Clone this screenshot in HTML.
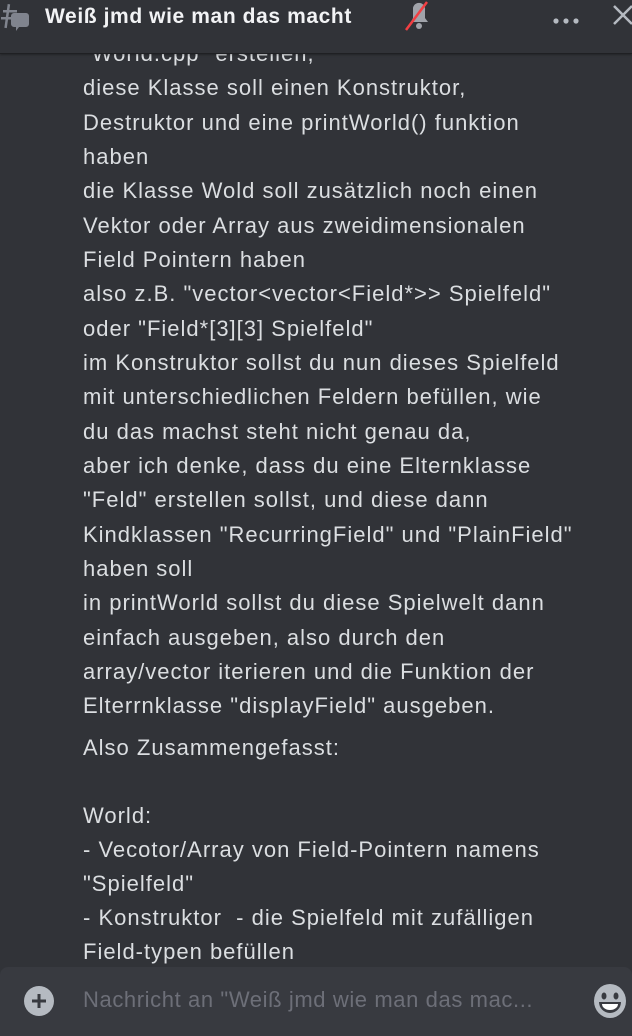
<!DOCTYPE html>
<html><head><meta charset="utf-8"><style>
body{margin:0;width:632px;height:1036px;overflow:hidden;background:#313338;font-family:"Liberation Sans",sans-serif;position:relative}
.hdr{position:absolute;left:0;top:0;width:632px;height:53px;background:#313338;border-bottom:1px solid #1f2023;z-index:2;box-shadow:0 1px 2px rgba(0,0,0,.3)}
.title{position:absolute;left:45px;top:5px;font-size:21px;letter-spacing:0.6px;font-weight:bold;color:#f2f3f5}
.msg{position:absolute;left:83px;top:37px;color:#dbdee1;font-size:22px;letter-spacing:1px;line-height:34.33px;white-space:pre}
.bar{position:absolute;left:0;top:967px;width:632px;height:69px;background:#383a40;border-radius:8px 8px 0 0}
.ph{position:absolute;left:83px;top:20px;font-size:22px;letter-spacing:0.6px;color:#6d6f78}
</style></head><body>
<div class="msg">"World.cpp" erstellen,
diese Klasse soll einen Konstruktor,
Destruktor und eine printWorld() funktion
haben
die Klasse Wold soll zusätzlich noch einen
Vektor oder Array aus zweidimensionalen
Field Pointern haben
also z.B. "vector&lt;vector&lt;Field*&gt;&gt; Spielfeld"
oder "Field*[3][3] Spielfeld"
im Konstruktor sollst du nun dieses Spielfeld
mit unterschiedlichen Feldern befüllen, wie
du das machst steht nicht genau da,
aber ich denke, dass du eine Elternklasse
"Feld" erstellen sollst, und diese dann
Kindklassen "RecurringField" und "PlainField"
haben soll
in printWorld sollst du diese Spielwelt dann
einfach ausgeben, also durch den
array/vector iterieren und die Funktion der
Elterrnklasse "displayField" ausgeben.</div>
<div class="msg" style="top:731px;line-height:34px">Also Zusammengefasst:

World:
- Vecotor/Array von Field-Pointern namens
"Spielfeld"
- Konstruktor  - die Spielfeld mit zufälligen
Field-typen befüllen</div>
<div class="hdr">
<svg style="position:absolute;left:0;top:2px" width="34" height="32" viewBox="0 0 34 32"><g fill="#80848e"><rect x="3" y="8" width="14" height="2.5"/><rect x="1" y="15" width="14" height="2.5"/><rect x="6" y="2" width="2.5" height="24" transform="rotate(8 7 14)"/><path d="M14 11h12a3 3 0 0 1 3 3v8a3 3 0 0 1-3 3h-7l-3 4v-4h-2a3 3 0 0 1-3-3v-8a3 3 0 0 1 3-3z"/></g></svg>
<div class="title">Weiß jmd wie man das macht</div>
<svg style="position:absolute;left:403px;top:0" width="28" height="32" viewBox="0 0 28 32"><path d="M10 8a6 6 0 0 1 12 2v8l3 4H8l2-4z" fill="#a0a3aa"/><circle cx="16" cy="26" r="3" fill="#a0a3aa"/><line x1="3" y1="30" x2="24" y2="2" stroke="#f23f43" stroke-width="2.5"/></svg>
<div style="position:absolute;left:552px;top:12px"><svg width="30" height="8"><circle cx="4" cy="4" r="2.6" fill="#b5bac1"/><circle cx="14" cy="4" r="2.6" fill="#b5bac1"/><circle cx="24" cy="4" r="2.6" fill="#b5bac1"/></svg></div>
<svg style="position:absolute;left:612px;top:4px" width="20" height="24"><path d="M2 2l18 18M20 2L2 20" stroke="#b5bac1" stroke-width="2.5"/></svg>
</div>
<div class="bar">
<svg style="position:absolute;left:23px;top:18px" width="32" height="32"><circle cx="16" cy="16" r="15" fill="#b5bac1"/><path d="M16 9v14M9 16h14" stroke="#383a40" stroke-width="3"/></svg>
<div class="ph">Nachricht an "Weiß jmd wie man das mac...</div>
<svg style="position:absolute;left:593px;top:16px" width="34" height="36"><ellipse cx="17" cy="18" rx="16" ry="17" fill="#b5bac1"/><ellipse cx="11" cy="13" rx="2.5" ry="3.5" fill="#383a40"/><ellipse cx="23" cy="13" rx="2.5" ry="3.5" fill="#383a40"/><path d="M6 19h22a11 11 0 0 1-22 0z" fill="#383a40"/><path d="M9 21h16a8 6 0 0 1-16 0z" fill="#fff"/></svg>
</div>
</body></html>
